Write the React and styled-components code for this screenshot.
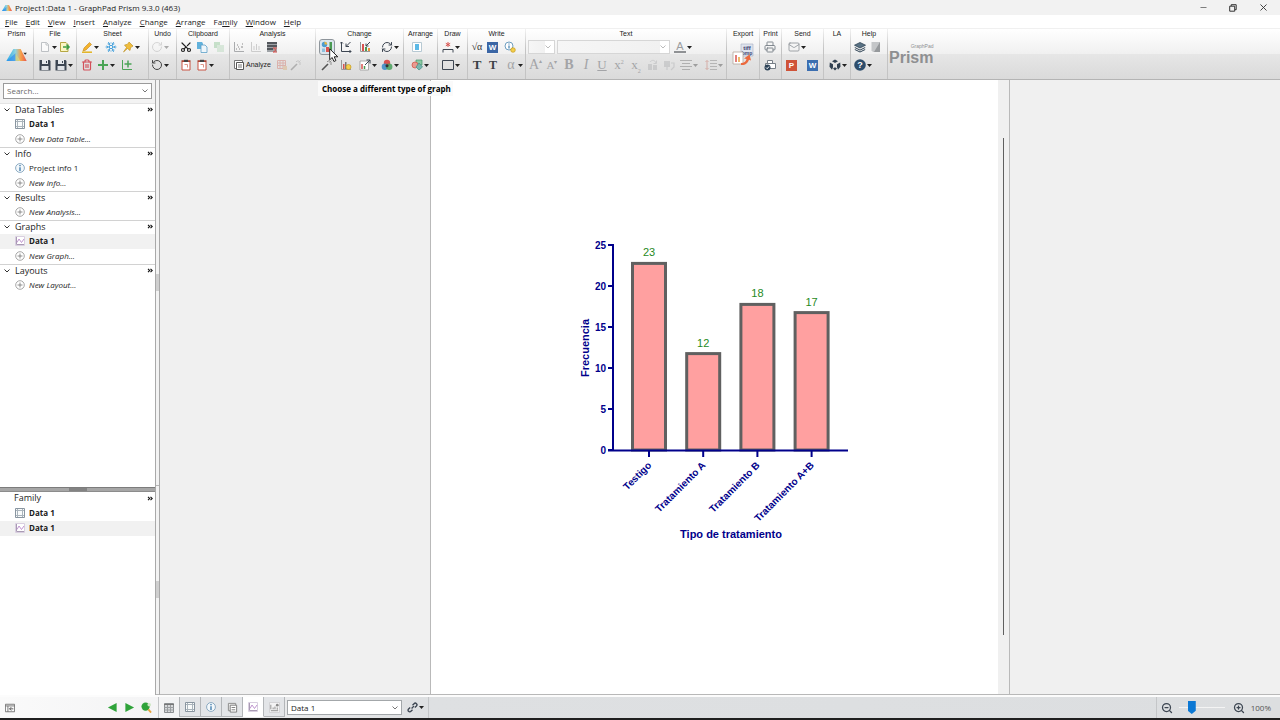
import { useState } from 'react'
import styled, { createGlobalStyle, css } from 'styled-components'
import {
  Snowflake, Scissors, Trash2, ZoomIn, ZoomOut, RotateCcw, RotateCw,
  RefreshCw, Mail, Minus, X, Printer,
} from 'lucide-react'

const GlobalStyle = createGlobalStyle`
  * { box-sizing: border-box; }
  body {
    margin: 0;
    background: #f0f0f0;
    color: #1c1c1c;
    font-family: "Open Sans", "Noto Sans", sans-serif;
    font-size: 8px;
  }
  button, input, select { font: inherit; color: inherit; }
  svg { display: block; flex: none; }
`

const Window = styled.div`
  display: flex;
  flex-direction: column;
  height: 100vh;
  overflow: hidden;
  border-bottom: 2px solid #1f1f1f;
`

const TitleBar = styled.header`
  display: flex;
  align-items: center;
  height: 15px;
  padding: 0 10px 0 2px;
  gap: 3px;
  background: #f2f2f2;
`
const Title = styled.h1`
  flex: 1;
  margin: 0;
  font-size: 8px;
  line-height: 14px;
  font-weight: 400;
`
const WindowButtons = styled.div`
  display: flex;
  gap: 16px;
`
const PlainButton = styled.button`
  display: flex;
  align-items: center;
  justify-content: center;
  padding: 0;
  border: 0;
  background: none;
`
const WindowButton = styled(PlainButton)`
  width: 14px;
  height: 14px;
`

const MenuBar = styled.nav`
  display: flex;
  align-items: center;
  gap: 8px;
  height: 13px;
  padding: 0 5px;
  background: #fff;
`
const MenuItem = styled(PlainButton)`
  display: block;
  line-height: 12px;
  white-space: pre;
  u { text-underline-offset: 1px; }
`

const Ribbon = styled.div`
  display: flex;
  height: 52px;
  border-top: 1px solid #f0f0f0;
  border-bottom: 1px solid #b4b4b4;
  background: linear-gradient(#fff 0, #f0f0f0 50%, #e6e6e6 51%, #dadada 100%);
`
const Group = styled.section`
  width: ${(p) => p.$w}px;
  flex: none;
  border-right: 1px solid;
  border-image: linear-gradient(#f4f4f4, #c4c4c4 40%, #c4c4c4) 1;
`
const GroupLabel = styled.h2`
  margin: 0;
  height: 9px;
  font: 400 7px/9px "Liberation Sans", Arial, sans-serif;
  text-align: center;
  white-space: nowrap;
`
const ToolRow = styled.div`
  display: flex;
  align-items: center;
  height: 18px;
  padding-left: ${(p) => p.$pad}px;
`
const ToolButton = styled.button`
  position: relative;
  display: flex;
  align-items: center;
  gap: 1px;
  flex: none;
  width: ${(p) => p.$w}px;
  height: 16px;
  padding: 0;
  border: 0;
  background: none;
  white-space: nowrap;
  font: 400 7px/16px "Liberation Sans", Arial, sans-serif;
  opacity: ${(p) => (p.$dim ? 0.35 : 1)};
  ${(p) => p.$pressed && css`
    > svg:first-child {
      background: #dbe6ee;
      box-shadow: 0 0 0 1px #dbe6ee;
      outline: 1px solid #8e959b;
      outline-offset: 1px;
      border-radius: 1px;
    }
  `}
`
const Glyph = styled.span`
  width: 12px;
  flex: none;
  text-align: center;
  color: ${(p) => p.$color || '#a3a4a7'};
  font: ${(p) => p.$style || '400'} ${(p) => p.$size || 14}px/16px "Liberation Serif", "Times New Roman", serif;
  text-decoration: ${(p) => (p.$underline ? 'underline' : 'none')};
  sup, sub { font-size: 6px; line-height: 0; }
`
const LetterTile = styled.span`
  width: 11px;
  height: 11px;
  flex: none;
  background: ${(p) => p.$bg};
  color: #fff;
  font: 700 8px/11px "Liberation Sans", Arial, sans-serif;
  text-align: center;
`
const BigTool = styled(PlainButton)`
  width: 100%;
  height: 34px;
`
const Brand = styled.div`
  display: flex;
  flex-direction: column;
  justify-content: center;
  padding: 1px 0 0 1px;
  color: #8e8f91;
  font-family: "Liberation Sans", Arial, sans-serif;
`
const BrandSmall = styled.span`
  align-self: flex-end;
  font-size: 5px;
  line-height: 6px;
`
const BrandName = styled.span`
  font-size: 16px;
  font-weight: 700;
  line-height: 18px;
`
const Tooltip = styled.div`
  position: absolute;
  z-index: 2;
  top: 42px;
  left: -3px;
  padding: 0 2px 0 4px;
  background: #fafafa;
  color: #000;
  font: 700 8px/15px "Open Sans", "Noto Sans", sans-serif;
`
const Pointer = styled.svg`
  position: absolute;
  z-index: 3;
  top: 9px;
  left: 8px;
`

const Combo = styled.label`
  display: flex;
  align-items: center;
  width: ${(p) => (p.$w ? `${p.$w}px` : 'auto')};
  height: ${(p) => p.$h || 15}px;
  padding-right: 3px;
  margin-right: ${(p) => p.$gap || 0}px;
  border: 1px solid ${(p) => p.$border || '#a3a7aa'};
  background: #fff;
  select, input {
    flex: 1;
    min-width: 0;
    height: 100%;
    padding: 0 2px 1px 3px;
    border: 0;
    outline: 0;
    appearance: none;
    background: ${(p) => (p.$faded ? 'linear-gradient(90deg, #f6f6f6, #f1f1f1)' : 'none')};
    opacity: 1;
  }
  input::placeholder { color: #6a6a6a; }
`

const Body = styled.div`
  display: flex;
  flex: 1;
  min-height: 0;
`
const Sidebar = styled.aside`
  display: flex;
  flex-direction: column;
  width: 155px;
  flex: none;
  background: #fff;
`
const SearchBox = styled.div`
  height: 23px;
  padding: 3px 3px 4px;
  background: #f3f3f3;
`
const Sections = styled.div`
  flex: 1;
`
const NavSection = styled.section`
  border-top: 1px solid #d2d2d2;
  &:first-child { border-top-color: #e4e4e4; }
`
const SectionHead = styled(PlainButton)`
  width: 100%;
  height: ${(p) => (p.$bordered ? 13 : 14)}px;
  padding: 0 2px 2px ${(p) => (p.$plain ? 14 : 4)}px;
  gap: 5px;
  font-size: 9px;
  line-height: 12px;
`
const HeadText = styled.span`
  flex: 1;
  text-align: left;
`
const NavItem = styled.a`
  display: flex;
  align-items: center;
  gap: 4px;
  height: 15px;
  padding: 0 0 1px 15px;
  color: #1c1c1c;
  background: ${(p) => (p.$active ? '#f1f1f1' : 'none')};
  font-size: 8px;
  font-weight: ${(p) => (p.$bold ? 700 : 400)};
  font-style: ${(p) => (p.$italic ? 'italic' : 'normal')};
  line-height: 14px;
  text-decoration: none;
`
const Splitter = styled.div`
  display: flex;
  justify-content: center;
  align-items: stretch;
  height: 5px;
  border-top: 1px solid #7c7c7c;
  border-bottom: 1px solid #8c8c8c;
  background: #a6a6a6;
  &::before { content: ''; width: 18px; background: #838383; }
`
const FamilyPanel = styled.section`
  flex: 0 0 33%;
`
const Gutter = styled.div`
  display: flex;
  flex-direction: column;
  width: 5px;
  flex: none;
  border-left: 1px solid #a9a9a9;
  border-right: 1px solid #a9a9a9;
  background: #f3f3f3;
`
const GutterPart = styled.div`
  display: flex;
  align-items: center;
  flex: ${(p) => p.$flex};
  border-bottom: 1px solid #b5b5b5;
  &::before { content: ''; width: 3px; height: 17px; background: #cfcfcf; }
`

const Workspace = styled.main`
  display: flex;
  justify-content: center;
  flex: 1;
  background: #f0f0f0;
  border-bottom: 1px solid #b8b8b8;
`
const Sheet = styled.div`
  display: flex;
  flex: 0 1 580px;
  border-left: 1px solid #b9b9b9;
  border-right: 1px solid #b9b9b9;
  background: #fff;
`
const SheetArea = styled.div`
  display: flex;
  flex: 1;
  align-items: center;
  justify-content: center;
  padding-top: 5px;
`
const ScrollTrack = styled.div`
  display: flex;
  justify-content: center;
  width: 11px;
  padding: 58px 0 59px;
  background: #f0f0f0;
  &::before { content: ''; width: 1px; background: #5f5f5f; }
`

const StatusBar = styled.footer`
  display: flex;
  align-items: center;
  height: 23px;
  flex: none;
  border-top: 2px solid #fcfcfc;
  background: linear-gradient(90deg, #fafafa 0, #f4f4f5 12%, #dee0e2 33%, #dcdee0 100%);
`
const StatusLeft = styled.div`
  display: flex;
  align-items: center;
  justify-content: space-between;
  width: 159px;
  height: 100%;
  padding: 0 6px 0 5px;
  border-right: 1px solid #c4c6c8;
`
const NavArrows = styled.div`
  display: flex;
  gap: 6px;
`
const Tabs = styled.div`
  display: flex;
  align-self: flex-start;
  margin-right: 2px;
  border-left: 1px solid #b3b6b9;
`
const Tab = styled.button`
  display: flex;
  align-items: center;
  justify-content: center;
  width: 21px;
  height: 20px;
  padding: 1px 0 0;
  border: 0;
  border-right: 1px solid #b3b6b9;
  border-bottom: 1px solid ${(p) => (p.$active ? '#fff' : '#b3b6b9')};
  background: ${(p) => (p.$active ? '#fff' : '#e3e5e8')};
`
const StatusTool = styled(PlainButton)`
  width: ${(p) => p.$w || 20}px;
  height: 16px;
  gap: 1px;
`
const ZoomPanel = styled.div`
  display: flex;
  align-items: center;
  height: 100%;
  margin-left: auto;
  padding: 0 9px 0 4px;
  border-left: 1px solid #c4c6c8;
  gap: 6px;
  color: #555;
  font-size: 8px;
`
const ZoomSlider = styled.input`
  width: 46px;
  height: 14px;
  margin: 0 2px 0 0;
  appearance: none;
  background: linear-gradient(#f4f4f4, #f4f4f4) center / 100% 1px no-repeat;
  &::-webkit-slider-thumb {
    appearance: none;
    width: 8px;
    height: 13px;
    background: #0b78d4;
    clip-path: polygon(0 0, 100% 0, 100% 75%, 50% 100%, 0 75%);
  }
`
const Spacer = styled.div`
  width: 1px;
  height: 100%;
  border-right: 1px solid #c4c6c8;
`

const ink = '#3d4652'
const Svg = ({ children, size = 12, box = 12, ...rest }) => (
  <svg width={size} height={size} viewBox={`0 0 ${box} ${box}`} fill="none" aria-hidden="true" {...rest}>
    {children}
  </svg>
)
const Caret = () => (
  <svg width="5" height="3" viewBox="0 0 5 3" aria-hidden="true"><path d="M0 0h5L2.500 3z" fill="#222" /></svg>
)
const Chevron = ({ color = '#777' }) => (
  <svg width="6" height="4" viewBox="0 0 6 4" aria-hidden="true"><path d="M.5.5 3 3 5.500.5" fill="none" stroke={color} /></svg>
)
const Double = () => (
  <svg width="6" height="5" viewBox="0 0 6 5" aria-hidden="true">
    <path d="m1 .8 1.700 1.700L1 4.200M3.500.8l1.700 1.700-1.700 1.700" fill="none" stroke="#111" strokeWidth="1.100" />
  </svg>
)
const Axes = ({ color = ink, children, s }) => (
  <Svg size={s}><path d="M1.500 1v9.500H11" stroke={color} />{children}</Svg>
)

const PrismMark = ({ width, id, caret }) => (
  <svg width={width} height={width * 0.6} viewBox="0 0 20 12" aria-hidden="true">
    <defs>
      <linearGradient id={id}>
        <stop offset="0" stopColor="#1fa7ea" />
        <stop offset=".45" stopColor="#8fd3df" />
        <stop offset=".7" stopColor="#f6a24a" />
        <stop offset="1" stopColor="#e8514d" />
      </linearGradient>
    </defs>
    <path d="M7 0h7l6 12H0z" fill={`url(#${id})`} />
    <path d="M0 12 9 4l4 8z" fill="#2b86f0" opacity=".6" />
    <path d="m9 4 5 8h-5z" fill="#f8e36c" opacity=".7" />
    {caret && <path d="M16.500 3.500H20l-1.700 2z" fill="#222" />}
  </svg>
)

const icons = {
  doc: <Svg opacity=".6"><path d="M2.500 1.500h5l2 2v7h-7z" fill="#fff" stroke="#9aa0a6" /><path d="M7 1.500V4h2.500" stroke="#9aa0a6" /></Svg>,
  importDoc: <Svg><path d="M1.500 1.500h5.500l2 2v7H1.500z" fill="#fbf6c4" stroke="#b5a743" /><path d="M4 6h5.500M7.500 3.500 10 6 7.500 8.500" stroke="#3f9d45" strokeWidth="1.600" /></Svg>,
  save: <Svg><path d="M.5 1h10l1 1v9.500H.5z" fill={ink} /><path d="M3 1h6v4H3z" fill="#e6e9ec" /><path d="M2.500 7h7v4h-7z" fill="#dfe2e6" /><path d="M7 2h1v2H7z" fill={ink} /></Svg>,
  pencil: <Svg><path d="m3 7 5.500-5.500L10.500 3.500 5 9l-3 1z" fill="#f4b32c" stroke="#c3861b" strokeWidth=".6" /><path d="M1 11.200h10" stroke="#e2b321" strokeWidth="1.500" /></Svg>,
  snow: <Snowflake size={12} color="#4aa3dc" strokeWidth={2} />,
  pin: <Svg><path d="m7 1 4 4-1 .5L8.500 7 8 9.500 5.500 7.500 1.500 11 4.500 6.500 2.500 4l2.500-.5L6.500 2z" fill="#f0bd3c" stroke="#b98917" strokeWidth=".6" /></Svg>,
  trash: <Trash2 size={12} color="#d3505a" strokeWidth={2.4} />,
  plus: <Svg><path d="M6 1v10M1 6h10" stroke="#4aa455" strokeWidth="2" /></Svg>,
  graphPlus: <Axes color="#4aa455"><path d="M7 1.500v7M3.500 5h7" stroke="#4aa455" strokeWidth="1.500" /></Axes>,
  redo: <RotateCw size={12} color="#999" />,
  undo: <RotateCcw size={12} color="#444" />,
  cut: <Scissors size={12} color="#222" strokeWidth={2.4} transform="rotate(-90)" />,
  copy: <Svg><path d="M1 1h5l1 1.500V8H1z" fill="#62b2dc" /><path d="M5 4h4l2 2v5.500H5z" fill="#eef6fb" stroke="#5a9fc8" strokeWidth=".8" /></Svg>,
  pasteGreen: <Svg opacity=".35"><path d="M1 1h6v6H1z" fill="#6eb877" /><path d="M4 4h7v7H4z" fill="#a4cfaa" /></Svg>,
  clipboard: <Svg><path d="M2 2.500h8v8.500H2z" fill="#fff" stroke="#c95342" /><path d="M1.500 2h9" stroke="#a44031" strokeWidth="1.500" /><path d="M4 .8h4V3H4z" fill="#444" /><path d="M4.500 5.500h3v3" stroke="#de9588" /></Svg>,
  scatter: <Axes color="#a9abad"><path d="M3 8h1M5 6h1M6 8h1M8 6h2M9 3h1M4 4h1" stroke="#888" /></Axes>,
  scatterFaint: <Axes color="#ccc"><path d="M4 9V5M6.500 9V3M9 9V5" stroke="#ccc" /></Axes>,
  table: <Svg><path d="M1 1h10v10H1z" fill="#9ea2a6" /><path d="M1 2h10M1 5h10M1 8h6" stroke="#3b3f44" strokeWidth="1.500" /><path d="M7 7h4M7 11h4M7.500 7 10 9l-2.500 2" stroke="#d9534f" /></Svg>,
  analyze: <Svg><path d="M1.500 1.500h8v8h-8z" fill="#fff" stroke="#777" /><path d="M3.500 3.500h7v7h-7z" fill="#fff" stroke="#555" /><path d="M5 6h4M5 8h4" stroke="#777" /></Svg>,
  redTable: <Svg opacity=".45"><path d="M1.500 1.500h8v8h-8zM1.500 4h8M1.500 6.500h8M4 1.500v8M7 1.500v8" stroke="#d37a6e" /><path d="M7 7h4v4H7z" fill="#dcb07c" /></Svg>,
  wand: <Svg><path d="m1 11 6-6" stroke="#555" strokeWidth="1.600" /><path d="M8 1v2M11 4H9M10.500 1.500 8.500 3.500M6 2l1 1M9.500 5l1 1" stroke="#888" strokeWidth=".9" /></Svg>,
  chartType: <Svg><circle cx="3.500" cy="3.500" r="2.700" fill="#4b9bd0" /><path d="M3.500 3.500V.8a2.700 2.700 0 0 1 2.700 2.700z" fill="#e7b53f" /><path d="M8.500 1H11v10H8.500z" fill="#4a9a52" /><path d="M1 7.500h3V11H1z" fill="#8fc0dc" /><path d="M5 6h3v5H5z" fill="#d9534f" /></Svg>,
  axisEdit: <Axes><path d="M10.500 1 6 5.500M6 2.500v3h3" stroke={ink} /><path d="M0 2.500 1.500 1 3 2.500M9.500 9l1.500 1.500L9.500 12" stroke={ink} /></Axes>,
  barEdit: <Axes color="#999"><path d="M3 3h2v7H3z" fill="#d9534f" /><path d="M6 6h2v4H6z" fill="#4a9a52" /><path d="M9 7h2v3H9z" fill="#e8923c" /><path d="m11 1-4 4M7 2.500V5h2.500" stroke={ink} /></Axes>,
  refresh: <RefreshCw size={12} color={ink} strokeWidth={2} />,
  graphSun: <Axes color="#999"><path d="M3 5h1.500v5H3z" fill="#d9534f" /><path d="M5 3h1.500v7H5z" fill="#777" /><circle cx="8.500" cy="8" r="2.500" fill="#f3cf4c" stroke="#c59a1a" strokeWidth=".7" /></Axes>,
  graphArrow: <Svg><path d="M1 2h8.500v9H1z" fill="#fff" stroke="#999" strokeWidth=".8" /><path d="M3 5v5" stroke="#d9534f" strokeWidth="1.500" /><path d="M5.500 7v3" stroke="#4a9a52" strokeWidth="1.500" /><path d="m6 6 5-5M7.500 1H11v3.500" stroke={ink} /></Svg>,
  venn: <Svg><circle cx="6" cy="4" r="3.200" fill="#d9534f" /><circle cx="3.900" cy="7.800" r="3.200" fill="#3f8fc6" opacity=".9" /><circle cx="8.200" cy="7.800" r="3.200" fill="#47a05a" opacity=".85" /><circle cx="6" cy="6.700" r="1.500" fill="#333" /></Svg>,
  arrange: <Svg><path d="M1.500 1.500h9v9h-9z" fill="#fff" stroke="#b7c9d3" /><path d="M4 3h4v6H4z" fill="#5cb9e6" /></Svg>,
  shapes: <Svg><path d="M5 1h6v5H5z" fill="#8cc9a3" stroke="#45926a" strokeWidth=".7" /><circle cx="4" cy="6" r="3" fill="#e99a90" stroke="#d15a4d" strokeWidth=".8" /><path d="m8 4 3.500 4L8 11 5 8z" fill="#79b7ae" stroke="#4c9489" strokeWidth=".8" /></Svg>,
  bracket: <Svg><path d="M1 11.500v-3h10v3" stroke={ink} /><path d="M6 1v5M3.800 2.300l4.400 2.500M8.200 2.300 3.800 4.800" stroke="#d9534f" /></Svg>,
  rect: <Svg><path d="M.5 1.500h11v9H.5z" stroke={ink} /></Svg>,
  infoSun: <Svg><circle cx="5" cy="5" r="4" fill="#fff" stroke="#6f9fc0" /><path d="M5 2.500v1M5 4.500v3" stroke="#3d7fae" strokeWidth="1.200" /><circle cx="9" cy="9" r="2.300" fill="#f3cf4c" stroke="#c59a1a" strokeWidth=".7" /></Svg>,
  rotL: <Svg><path d="M1 5h4v6H1zM6 6h4v5H6z" fill="#a2a4a7" /><path d="M3 3c2-2.500 5-2 6 1M9.500 1.500V4.500h-3" stroke="#a2a4a7" /></Svg>,
  rotR: <Svg><path d="M1 2h6v6H1z" fill="#a2a4a7" /><path d="M8 4h3v4L8 11M4 8v3" stroke="#a2a4a7" strokeWidth="1.200" /></Svg>,
  align: <Svg><path d="M0 1.500h12M2 4.500h8M0 7.500h12M2 10.500h8" stroke="#555" /></Svg>,
  spacing: <Svg><path d="M5 1.500h7M5 4.500h7M5 7.500h7M5 10.500h7" stroke="#666" /><path d="M2 1.500v9M.5 3 2 1.500 3.500 3M.5 9 2 10.500 3.500 9" stroke="#c0503f" /></Svg>,
  fontColor: <Svg><path d="M0 10h12v2H0z" fill="#8f9194" /><text x="6" y="9" textAnchor="middle" fill="#9b9da0" fontSize="11" fontFamily="Liberation Sans">A</text></Svg>,
  printer: <Printer size={12} color="#777f87" strokeWidth={1.800} />,
  printCheck: <Svg><path d="M3.500 4V1.500h5V4M1.500 4.500h10v5h-10z" fill="#fff" stroke="#777f87" /><circle cx="3.500" cy="8.500" r="3" fill="#2c4257" /><path d="m2 8.500 1.200 1.200L5 7.500" stroke="#fff" /></Svg>,
  mail: <Mail size={12} color="#8a8f96" strokeWidth={1.600} />,
  hexes: <Svg><path d="m6 .5 3 1.700L6 4 3 2.200zM.8 3.500 4 5.300v3l-1 2.500-2.500-3zM11.200 3.500 8 5.300v3l1 2.500 2.500-3zM4 9.500l2-1.200 2 1.200-2 2z" fill="#2f3f50" /></Svg>,
  cap: <Svg><path d="m6 1.500 5.500 2.700L6 7 .5 4.200z" fill="#5a7385" stroke="#2f4354" strokeWidth=".8" /><path d="m.8 6.500 5.200 2.600 5.200-2.600M.8 8.500 6 11l5.200-2.500" stroke="#2f4354" /></Svg>,
  book: <Svg><path d="M1.500 1h8.500v10H3L1.500 9.500z" fill="#c4c6c8" /><path d="M10 1v10H4z" fill="#96999c" /></Svg>,
  help: <Svg><circle cx="6" cy="6" r="5.800" fill="#2d4d6c" /><text x="6" y="9" textAnchor="middle" fill="#fff" fontSize="9" fontWeight="700" fontFamily="Liberation Sans">?</text></Svg>,
}

const sheetIcon = (
  <Svg size={10} box={10}><path d="M.5.5h9v9h-9z" fill="#f9fbfb" stroke="#8995a0" /><path d="M1 2.500h8M1 7.500h8M2.500 1v8M7.500 1v8" stroke="#aab4bc" /></Svg>
)
const graphIcon = (
  <Svg size={10} box={10}><path d="M.5.5h9v9h-9z" fill="#fff" stroke="#d9cfe0" /><path d="M1.500 1v7.500H9" stroke="#a99bb4" /><path d="m2 6.500 2-3.500 2.500 3.500L9 3" stroke="#b98acb" strokeWidth=".9" /></Svg>
)
const infoIcon = (
  <Svg size={10}><circle cx="6" cy="6" r="5.300" fill="#f3f8fb" stroke="#7a9cb8" /><path d="M6 2.500V4M6 5v4.500" stroke="#3c79ab" strokeWidth="1.600" /></Svg>
)
const addIcon = (
  <Svg size={10} box={10}><circle cx="5" cy="5" r="4.300" stroke="#8f8f8f" strokeWidth=".8" /><path d="M5 2.500v5M2.500 5h5" stroke="#777" strokeWidth=".8" /></Svg>
)
const pagesIcon = (
  <Svg size={11}><path d="M1.500 1.500h8v8h-8z" fill="#eee" stroke="#888" /><path d="M3.500 3.500h7v7.500h-7z" fill="#fff" stroke="#777" /><path d="M5 6h4M5 8.500h4" stroke="#777" /></Svg>
)
const layoutIcon = (
  <Svg size={11}><path d="M.5.5h11v11H.5z" fill="#f4f4f5" stroke="#cfcfd2" /><path d="M2 8V3M2 9.500h8M4.500 8V6M6.500 8V5" stroke="#888" /><circle cx="9" cy="3.500" r="1.500" fill="#888" /><path d="M9 6v2.500" stroke="#888" /></Svg>
)

// each tool: [name, icon, slot width, caret, dim, text]
const groupsBeforeText = [
  { label: 'File', w: 43, pad: 5, rows: [
    [['New file', 'doc', 20, 1], ['Open', 'importDoc', 12]],
    [['Save', 'save', 16], ['Save as', 'save', 18, 1]],
  ] },
  { label: 'Sheet', w: 72, pad: 4, rows: [
    [['Highlight', 'pencil', 24, 1], ['Freeze', 'snow', 17], ['Pin', 'pin', 20, 1]],
    [['Delete sheet', 'trash', 16], ['New sheet', 'plus', 24, 1], ['New graph', 'graphPlus', 12]],
  ] },
  { label: 'Undo', w: 28, pad: 2, rows: [
    [['Redo', 'redo', 22, 1, true]],
    [['Undo', 'undo', 22, 1]],
  ] },
  { label: 'Clipboard', w: 53, pad: 3, rows: [
    [['Cut', 'cut', 16], ['Copy', 'copy', 17], ['Paste link', 'pasteGreen', 12]],
    [['Paste', 'clipboard', 16], ['Paste special', 'clipboard', 20, 1]],
  ] },
  { label: 'Analysis', w: 86, pad: 3, rows: [
    [['Fit curve', 'scatter', 17], ['Simulate', 'scatterFaint', 16], ['Statistics', 'table', 12]],
    [['Analyze', 'analyze', 43, 0, false, 'Analyze'], ['Edit analysis', 'redTable', 14], ['Analysis wizard', 'wand', 12, 0, true]],
  ] },
  { label: 'Change', w: 88, pad: 5, rows: [
    [['Choose a different type of graph', 'chartType', 19], ['Format axes', 'axisEdit', 19], ['Format graph', 'barEdit', 22], ['Rotate', 'refresh', 20, 1]],
    [['Magic', 'wand', 19], ['Highlight graph', 'graphSun', 19], ['Resize graph', 'graphArrow', 22, 1], ['Colors', 'venn', 20, 1]],
  ] },
  { label: 'Arrange', w: 34, pad: 7, rows: [
    [['Center', 'arrange', 12]],
    [['Order', 'shapes', 20, 1]],
  ] },
  { label: 'Draw', w: 30, pad: 4, rows: [
    [['Draw bracket', 'bracket', 22, 1]],
    [['Draw rectangle', 'rect', 22, 1]],
  ] },
]

const Tool = ({ item: [name, icon, w, caret, dim, text] }) => {
  const hovered = icon === 'chartType'
  return (
    <ToolButton type="button" aria-label={name} $w={w} $dim={dim} $pressed={hovered}>
      {icons[icon]}
      {text}
      {caret ? <Caret /> : null}
      {hovered && (
        <>
          <Tooltip role="tooltip">Choose a different type of graph</Tooltip>
          <Pointer width="10" height="15" viewBox="0 0 10 15">
            <path d="M.7.8v11l2.500-2.300 1.700 4 2-.9-1.700-3.800h3.600z" fill="#fff" stroke="#222" />
          </Pointer>
        </>
      )}
    </ToolButton>
  )
}

const RibbonGroup = ({ label, w, pad, rows, children }) => (
  <Group $w={w} aria-label={label}>
    <GroupLabel>{label}</GroupLabel>
    {rows && rows.map((row, i) => (
      <ToolRow key={i} $pad={pad}>
        {row.map((item) => <Tool key={item[0]} item={item} />)}
      </ToolRow>
    ))}
    {children}
  </Group>
)

const TextTool = ({ name, w = 17, caret, children, ...glyph }) => (
  <ToolButton type="button" aria-label={name} $w={w}>
    <Glyph {...glyph}>{children}</Glyph>
    {caret && <Caret />}
  </ToolButton>
)

const TextGroups = () => (
  <>
    <RibbonGroup label="Write" w={58}>
      <ToolRow $pad={3}>
        <TextTool name="Equation" w={16} $color="#333" $size={10}>√α</TextTool>
        <ToolButton type="button" aria-label="Word text" $w={17}><LetterTile $bg="#3b66a5">W</LetterTile></ToolButton>
        <Tool item={['Info', 'infoSun', 12]} />
      </ToolRow>
      <ToolRow $pad={3}>
        <TextTool name="Text" w={16} $color="#3a3f45" $style="700" $size={13}>T</TextTool>
        <TextTool name="Text box" w={18} $color="#3a3f45" $style="700" $size={12}>T</TextTool>
        <TextTool name="Symbol" w={20} caret>α</TextTool>
      </ToolRow>
    </RibbonGroup>
    <RibbonGroup label="Text" w={201}>
      <ToolRow $pad={2}>
        <Combo $w={27} $h={14} $gap={2} $border="#d6d6d6" $faded>
          <select aria-label="Font size" disabled /><Chevron color="#bbb" />
        </Combo>
        <Combo $w={113} $h={14} $gap={4} $border="#d6d6d6" $faded>
          <select aria-label="Font" disabled /><Chevron color="#bbb" />
        </Combo>
        <Tool item={['Font color', 'fontColor', 20, 1]} />
      </ToolRow>
      <ToolRow $pad={3}>
        <TextTool name="Grow font">A<sup>▴</sup></TextTool>
        <TextTool name="Shrink font" $size={11}>A<sup>▾</sup></TextTool>
        <TextTool name="Bold" $style="700">B</TextTool>
        <TextTool name="Italic" w={16} $style="italic">I</TextTool>
        <TextTool name="Underline" $underline $size={13}>U</TextTool>
        <TextTool name="Superscript" $size={13}>x<sup>2</sup></TextTool>
        <TextTool name="Subscript" $size={13}>x<sub>2</sub></TextTool>
        <Tool item={['Rotate left', 'rotL', 16, 0, true]} />
        <Tool item={['Rotate right', 'rotR', 17, 0, true]} />
        <Tool item={['Align', 'align', 25, 1, true]} />
        <Tool item={['Line spacing', 'spacing', 19, 1, true]} />
      </ToolRow>
    </RibbonGroup>
  </>
)

const OutputGroups = () => (
  <>
    <RibbonGroup label="Export" w={33}>
      <BigTool type="button" aria-label="Export">
        <svg width="22" height="24" viewBox="0 0 22 24">
          <path d="M9 1h12v12H9z" fill="#dfe4ee" stroke="#a8afc2" strokeWidth=".6" />
          <text x="15" y="7" fontSize="6" fontWeight="700" textAnchor="middle" fill="#3d4570" fontFamily="Liberation Sans">tiff</text>
          <text x="15" y="12" fontSize="5" fontWeight="700" textAnchor="middle" fill="#3d4570" fontFamily="Liberation Sans">bmp</text>
          <path d="M1 9h10v12H1z" fill="#fff" stroke="#b5a79c" strokeWidth=".8" />
          <path d="M4 12v7" stroke="#d9534f" strokeWidth="1.500" />
          <path d="M7 14v5" stroke="#e8a33c" strokeWidth="1.500" />
          <path d="M9 20c3 0 5-1.500 5.500-4L12 15.500l5.500-4 1.500 6-2-.8C16 20 13 22.500 9 22z" fill="#ec6a3f" />
        </svg>
      </BigTool>
    </RibbonGroup>
    <RibbonGroup label="Print" w={22} pad={4} rows={[[['Print', 'printer', 12]], [['Quick print', 'printCheck', 12]]]} />
    <RibbonGroup label="Send" w={42}>
      <ToolRow $pad={6}><Tool item={['Email', 'mail', 18, 1]} /></ToolRow>
      <ToolRow $pad={4}>
        <ToolButton type="button" aria-label="PowerPoint" $w={21}><LetterTile $bg="#cf5338">P</LetterTile></ToolButton>
        <ToolButton type="button" aria-label="Word" $w={12}><LetterTile $bg="#3b6eb0">W</LetterTile></ToolButton>
      </ToolRow>
    </RibbonGroup>
    <RibbonGroup label="LA" w={27} pad={5} rows={[[], [['LabArchives', 'hexes', 19, 1]]]} />
    <RibbonGroup label="Help" w={37} pad={3} rows={[
      [['Learn', 'cap', 16], ['Guide', 'book', 12]],
      [['Help', 'help', 19, 1]],
    ]} />
  </>
)

const sections = [
  { title: 'Data Tables', items: [['Data 1', sheetIcon, 'bold'], ['New Data Table...', addIcon, 'new']] },
  { title: 'Info', items: [['Project info 1', infoIcon, 'info'], ['New Info...', addIcon, 'new']] },
  { title: 'Results', items: [['New Analysis...', addIcon, 'new']] },
  { title: 'Graphs', items: [['Data 1', graphIcon, 'bold', true], ['New Graph...', addIcon, 'new']] },
  { title: 'Layouts', items: [['New Layout...', addIcon, 'new']] },
]
const family = [['Data 1', sheetIcon, 'bold'], ['Data 1', graphIcon, 'bold', true]]

const NavItems = ({ items }) => items.map(([text, icon, kind, active], i) => (
  <NavItem key={i} href="#" $bold={kind === 'bold'} $italic={kind === 'new'} $active={active}>
    {icon}
    {text}
  </NavItem>
))

const bars = [
  { name: 'Testigo', value: 23 },
  { name: 'Tratamiento A', value: 12 },
  { name: 'Tratamiento B', value: 18 },
  { name: 'Tratamiento A+B', value: 17 },
]
const navy = '#00008b'
const ticks = [0, 5, 10, 15, 20, 25]
const yFor = (v) => 220 - v * 8.2
const xFor = (i) => 79 + i * 54.2

const Chart = () => (
  <svg width="290" height="320" viewBox="0 0 290 320" fontFamily="Liberation Sans, Arial, sans-serif" role="img" aria-label="Frecuencia por tipo de tratamiento">
    {bars.map((b, i) => (
      <g key={b.name}>
        <rect x={xFor(i) - 16.5} y={yFor(b.value) + 2} width="33" height={b.value * 8.2 - 2} fill="#ffa0a0" stroke="#606060" strokeWidth="3" />
        <text x={xFor(i)} y={yFor(b.value) - 5} fontSize="11" textAnchor="middle" fill="#1f8a24">{b.value}</text>
        <path d={`M${xFor(i)} 220v7`} stroke={navy} strokeWidth="2" />
        <text transform={`translate(${xFor(i) + 3} 236) rotate(-45)`} fontSize="10" fontWeight="700" textAnchor="end" fill={navy}>{b.name}</text>
      </g>
    ))}
    <path d="M43 14v207" stroke={navy} strokeWidth="2" />
    <path d="M38 220.500h240" stroke={navy} strokeWidth="2" />
    {ticks.map((t) => (
      <g key={t}>
        <path d={`M38 ${yFor(t)}h5`} stroke={navy} strokeWidth="2" />
        <text x="36" y={yFor(t) + 4} fontSize="10" fontWeight="700" textAnchor="end" fill={navy}>{t}</text>
      </g>
    ))}
    <text transform="translate(19 118) rotate(-90)" fontSize="11" fontWeight="700" textAnchor="middle" fill={navy}>Frecuencia</text>
    <text x="161" y="308" fontSize="11" fontWeight="700" textAnchor="middle" fill={navy}>Tipo de tratamiento</text>
  </svg>
)

// the second value is the index of the access key letter
const menus = [
  ['File', 0], ['Edit', 0], ['View', 0], ['Insert', 0], ['Analyze', 0],
  ['Change', 0], ['Arrange', 0], ['Family', 2], ['Window', 0], ['Help', 0],
]

const App = () => {
  const [zoom, setZoom] = useState(24)
  const [query, setQuery] = useState('')

  return (
    <Window>
      <GlobalStyle />
      <TitleBar>
        <PrismMark width={10} id="mark-small" />
        <Title>Project1:Data 1 - GraphPad Prism 9.3.0 (463)</Title>
        <WindowButtons>
          <WindowButton type="button" aria-label="Minimize"><Minus size={9} color="#555" /></WindowButton>
          <WindowButton type="button" aria-label="Restore">
            <Svg size={8} box={8}><path d="M.7 2.200h5v5h-5z" stroke="#333" /><path d="M2.200 2V.7h5v5H6" stroke="#333" /></Svg>
          </WindowButton>
          <WindowButton type="button" aria-label="Close"><X size={11} color="#333" /></WindowButton>
        </WindowButtons>
      </TitleBar>
      <MenuBar>
        {menus.map(([m, k]) => (
          <MenuItem key={m} type="button">{m.slice(0, k)}<u>{m[k]}</u>{m.slice(k + 1)}</MenuItem>
        ))}
      </MenuBar>
      <Ribbon>
        <RibbonGroup label="Prism" w={34}>
          <BigTool type="button" aria-label="Prism"><PrismMark width={21} id="mark-big" caret /></BigTool>
        </RibbonGroup>
        {groupsBeforeText.map((g) => <RibbonGroup key={g.label} {...g} />)}
        <TextGroups />
        <OutputGroups />
        <Brand>
          <BrandSmall>GraphPad</BrandSmall>
          <BrandName>Prism</BrandName>
        </Brand>
      </Ribbon>
      <Body>
        <Sidebar>
          <SearchBox>
            <Combo $h={16} $border="#9a9a9a">
              <input aria-label="Search" placeholder="Search..." value={query} onChange={(e) => setQuery(e.target.value)} />
              <Chevron />
            </Combo>
          </SearchBox>
          <Sections>
            {sections.map((s) => (
              <NavSection key={s.title}>
                <SectionHead type="button" $bordered>
                  <Chevron color="#333" />
                  <HeadText>{s.title}</HeadText>
                  <Double />
                </SectionHead>
                <NavItems items={s.items} />
              </NavSection>
            ))}
          </Sections>
          <Splitter />
          <FamilyPanel>
            <SectionHead type="button" $plain>
              <HeadText>Family</HeadText>
              <Double />
            </SectionHead>
            <NavItems items={family} />
          </FamilyPanel>
        </Sidebar>
        <Gutter>
          <GutterPart $flex={66} />
          <GutterPart $flex={34} />
        </Gutter>
        <Workspace>
          <Sheet>
            <SheetArea><Chart /></SheetArea>
            <ScrollTrack />
          </Sheet>
        </Workspace>
      </Body>
      <StatusBar>
        <StatusLeft>
          <PlainButton type="button" aria-label="Hide navigator">
            <Svg size={10}><path d="M.5 1.500h11v9H.5zM.5 3.500h11M3.500 3.500v7" stroke="#666" /><path d="M10 7H5.500M7.500 5 5.500 7l2 2" stroke="#444" /></Svg>
          </PlainButton>
          <NavArrows>
            <PlainButton type="button" aria-label="Previous sheet"><Svg size={11}><path d="M10.500 1v10L1 6z" fill="#2fa33a" /></Svg></PlainButton>
            <PlainButton type="button" aria-label="Next sheet"><Svg size={11}><path d="M1.500 1v10L11 6z" fill="#2fa33a" /></Svg></PlainButton>
            <PlainButton type="button" aria-label="Find sheet"><Svg size={11}><circle cx="5" cy="5" r="4.500" fill="#2fa33a" /><path d="m8 8 3 3.500" stroke="#e8a33c" strokeWidth="2" /><circle cx="9" cy="3" r="2" fill="#cfe8c5" /></Svg></PlainButton>
          </NavArrows>
        </StatusLeft>
        <StatusTool type="button" aria-label="Sheet list">
          <Svg size={10} box={10}><path d="M.5.5h9v9h-9z" fill="#d7d9db" stroke="#8b8e91" /><path d="M0 1.500h10" stroke="#777" /><path d="M.5 4.500h9M.5 7h9M3.500 2v7M6.500 2v7" stroke="#9b9ea1" /></Svg>
        </StatusTool>
        <Tabs>
          <Tab type="button" aria-label="Data tables">{sheetIcon}</Tab>
          <Tab type="button" aria-label="Info">{infoIcon}</Tab>
          <Tab type="button" aria-label="Results">{pagesIcon}</Tab>
          <Tab type="button" aria-label="Graphs" $active>{graphIcon}</Tab>
          <Tab type="button" aria-label="Layouts">{layoutIcon}</Tab>
        </Tabs>
        <Combo $w={115}>
          <select aria-label="Sheet"><option>Data 1</option></select>
          <Chevron />
        </Combo>
        <StatusTool type="button" aria-label="Linked sheets" $w={26}>
          <Svg size={11}><path d="m5 7 2.500-2.500M6 3.500l1.700-1.700a1.800 1.800 0 0 1 2.600 2.600L8.500 6M6 8.500l-1.700 1.700a1.800 1.800 0 0 1-2.600-2.600L3.500 6" stroke={ink} strokeWidth="1.500" /></Svg>
          <Caret />
        </StatusTool>
        <Spacer />
        <ZoomPanel>
          <PlainButton type="button" aria-label="Zoom out"><ZoomOut size={12} color={ink} strokeWidth={2.5} /></PlainButton>
          <ZoomSlider type="range" min="0" max="100" aria-label="Zoom" value={zoom} onChange={(e) => setZoom(Number(e.target.value))} />
          <PlainButton type="button" aria-label="Zoom in"><ZoomIn size={12} color={ink} strokeWidth={2.5} /></PlainButton>
          <output>100%</output>
        </ZoomPanel>
      </StatusBar>
    </Window>
  )
}

export default App
